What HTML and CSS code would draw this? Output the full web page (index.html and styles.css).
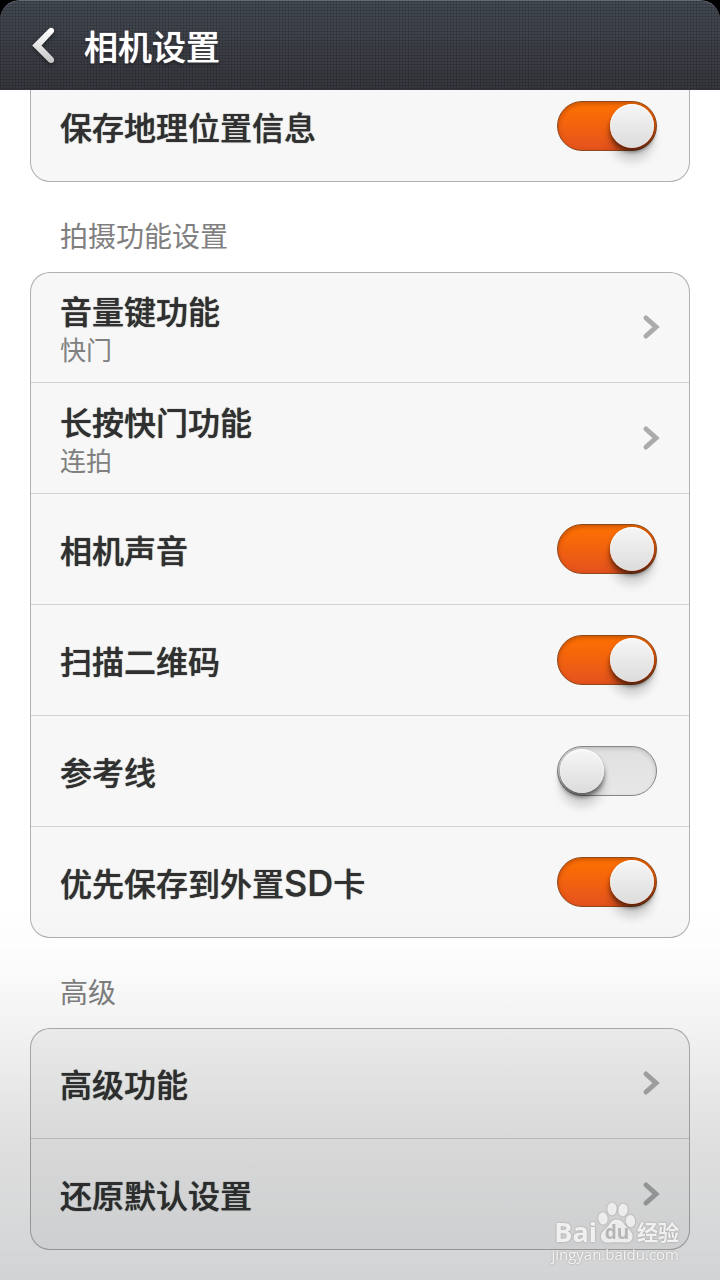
FILE: index.html
```html
<!DOCTYPE html>
<html lang="zh-CN">
<head>
  <meta charset="utf-8">
  <meta name="viewport" content="width=device-width, initial-scale=1">
  <title>相机设置</title>
  <link rel="stylesheet" href="styles.css">
</head>
<body>
  <div class="header-wrap">
    <header class="header">
      <button class="back" type="button" aria-label="返回">
        <svg width="24" height="38" viewBox="0 0 24 38">
          <defs>
            <linearGradient id="backFill" x1="0" y1="0" x2="0" y2="38" gradientUnits="userSpaceOnUse">
              <stop offset="0.1" stop-color="#ffffff"/>
              <stop offset="0.9" stop-color="#c8c8c8"/>
            </linearGradient>
          </defs>
          <path d="M16.6 1.9 Q18.6 0.2 20.9 1.2 Q23 3 21.5 5.6 L9.5 18.5 L21.5 31 Q23 33.8 20.9 35.6 Q18.6 36.6 16.6 34.9 L0.2 18.5 Z" fill="url(#backFill)"/>
        </svg>
      </button>
      <h1>相机设置</h1>
    </header>
  </div>

  <main class="settings">
    <div class="card card-first">
      <label class="row">
        <span class="title">保存地理位置信息</span>
        <input class="switch" type="checkbox" checked>
      </label>
    </div>

    <h2>拍摄功能设置</h2>
    <div class="card">
      <a class="row" href="#">
        <span class="texts">
          <span class="title">音量键功能</span>
          <span class="value">快门</span>
        </span>
        <svg class="arrow" width="18" height="26" viewBox="0 0 18 26"><path d="M4 4 L14 13 L4 22"/></svg>
      </a>
      <a class="row" href="#">
        <span class="texts">
          <span class="title">长按快门功能</span>
          <span class="value">连拍</span>
        </span>
        <svg class="arrow" width="18" height="26" viewBox="0 0 18 26"><path d="M4 4 L14 13 L4 22"/></svg>
      </a>
      <label class="row">
        <span class="title">相机声音</span>
        <input class="switch" type="checkbox" checked>
      </label>
      <label class="row">
        <span class="title">扫描二维码</span>
        <input class="switch" type="checkbox" checked>
      </label>
      <label class="row">
        <span class="title">参考线</span>
        <input class="switch" type="checkbox">
      </label>
      <label class="row">
        <span class="title">优先保存到外置<span class="latin">SD</span>卡</span>
        <input class="switch" type="checkbox" checked>
      </label>
    </div>

    <h2>高级</h2>
    <div class="card">
      <a class="row" href="#">
        <span class="title">高级功能</span>
        <svg class="arrow" width="18" height="26" viewBox="0 0 18 26"><path d="M4 4 L14 13 L4 22"/></svg>
      </a>
      <a class="row" href="#">
        <span class="title">还原默认设置</span>
        <svg class="arrow" width="18" height="26" viewBox="0 0 18 26"><path d="M4 4 L14 13 L4 22"/></svg>
      </a>
    </div>
  </main>

  <div class="shade"></div>

  <div class="watermark">
    <div class="brand">
      <span class="bai">Bai</span>
      <span class="paw">
        <svg width="38" height="42" viewBox="0 0 38 42">
          <ellipse cx="5" cy="16.5" rx="4.6" ry="6" transform="rotate(-8 5 16.5)"/>
          <ellipse cx="14" cy="7" rx="4.6" ry="6.2"/>
          <ellipse cx="25" cy="8" rx="4.6" ry="6.2" transform="rotate(10 25 8)"/>
          <ellipse cx="32.5" cy="19" rx="4.6" ry="6" transform="rotate(-8 32.5 19)"/>
          <path d="M18.5 17.5 C24 17.5 25.5 22 28.5 25 C32 28.5 35 31 34.5 35 C34 40 30 41 26 40.5 C22 40 16 40 12 40.5 C7 41 3 39.5 3 34.5 C3 30 7 28 9.5 25 C12.5 21.5 13.5 17.5 18.5 17.5 Z"/>
        </svg>
        <span class="du">du</span>
      </span>
      <span class="jingyan">经验</span>
    </div>
    <div class="site">jingyan.baidu.com</div>
  </div>
</body>
</html>
```

FILE: styles.css
```css
* {
  box-sizing: border-box;
}

body {
  margin: 0;
  min-height: 100vh;
  background: #fff;
  color: #303030;
  font-family: "Noto Sans CJK SC", sans-serif;
}

/* Title bar */
.header-wrap {
  position: relative;
  z-index: 1;
  background: #000;
}

.header {
  display: flex;
  align-items: center;
  gap: 28px;
  height: 90px;
  padding: 0 32px;
  border-top: 1px solid #646a72;
  border-radius: 20px 20px 0 0;
  background:
    repeating-linear-gradient(90deg, rgba(0, 0, 0, 0.14) 0 1px, transparent 1px 3px),
    repeating-linear-gradient(rgba(0, 0, 0, 0.14) 0 1px, transparent 1px 3px),
    linear-gradient(#434953, #3b3e45 60%, #36373d);
}

.header h1 {
  margin: 0;
  color: #fff;
  font-size: 34px;
  font-weight: 500;
  line-height: 48px;
  text-shadow: 0 0 1px #fff, 0 2px 3px rgba(0, 0, 0, 0.5);
}

.back {
  display: flex;
  padding: 0;
  border: 0;
  background: none;
  filter: drop-shadow(0 2px 2px rgba(0, 0, 0, 0.4));
}

/* Settings list */
.settings {
  padding: 0 30px 30px;
}

.settings h2 {
  display: flex;
  align-items: center;
  height: 90px;
  margin: 0;
  padding: 16px 0 0 30px;
  color: #808080;
  font-size: 28px;
  font-weight: 400;
}

.card {
  border-radius: 20px;
  background: #f7f7f7;
  box-shadow: inset 0 0 0 1px #b0b0b0;
}

/* the list is scrolled a little under the title bar */
.card-first {
  margin-top: -19px;
}

.row {
  display: flex;
  align-items: center;
  justify-content: space-between;
  height: 111px;
  margin: 0 1px;
  padding: 0 29px;
  border-bottom: 1px solid #d2d2d2;
  color: inherit;
  text-decoration: none;
}

.row:last-child {
  border-bottom-color: transparent;
}

.texts {
  display: flex;
  flex-direction: column;
}

.title {
  font-size: 32px;
  font-weight: 500;
  line-height: 44px;
  text-shadow: 0 0 1px #303030;
}

.latin {
  font-family: Inter, sans-serif;
  font-size: 36px;
}

.value {
  color: #808080;
  font-size: 26px;
  line-height: 34px;
}

.arrow {
  fill: none;
  stroke: #ababab;
  stroke-width: 5;
  stroke-linecap: round;
}

/* On/off switch */
.switch {
  appearance: none;
  flex: none;
  width: 100px;
  height: 50px;
  margin: 0 3px 0 0;
  padding: 2px;
  border: 1px solid #8c8480;
  border-radius: 25px;
  background: linear-gradient(#e0e0e0, #e8e8e8);
  box-shadow: inset 0 2px 4px rgba(0, 0, 0, 0.15);
}

.switch::before {
  content: "";
  display: block;
  width: 44px;
  height: 44px;
  border-radius: 50%;
  background: linear-gradient(#f6f6f6, #dcdcdc);
  box-shadow:
    inset 0 1px 2px #fff,
    0 4px 5px rgba(0, 0, 0, 0.55),
    0 14px 10px rgba(0, 0, 0, 0.14);
}

.switch:checked {
  border-color: #8f4a1c;
  background: linear-gradient(#ff7200, #e4521e);
  box-shadow: inset 0 2px 4px rgba(100, 30, 0, 0.35);
}

.switch:checked::before {
  margin-left: auto;
}

/* Darkening towards the bottom of the screen */
.shade {
  position: fixed;
  right: 0;
  bottom: 0;
  left: 0;
  height: 380px;
  background: linear-gradient(rgba(20, 24, 30, 0), rgba(20, 24, 30, 0.01) 15%, rgba(20, 24, 30, 0.06) 35%, rgba(20, 24, 30, 0.14) 65%, rgba(20, 24, 30, 0.19));
  pointer-events: none;
}

/* Watermark */
.watermark {
  position: fixed;
  right: 41px;
  bottom: 16px;
  color: rgba(255, 255, 255, 0.85);
  font-family: "Open Sans", "Noto Sans CJK SC", sans-serif;
  text-shadow: 0 0 2px rgba(0, 0, 0, 0.3);
}

.brand {
  display: flex;
  align-items: flex-end;
  justify-content: flex-end;
  gap: 1px;
  height: 42px;
}

.bai {
  font-size: 27px;
  font-weight: 700;
  line-height: 24px;
}

.paw {
  position: relative;
  display: flex;
}

.paw svg {
  fill: rgba(255, 255, 255, 0.8);
  filter: drop-shadow(0 0 1px rgba(0, 0, 0, 0.3));
}

.du {
  position: absolute;
  right: 0;
  bottom: 2px;
  left: 0;
  color: #b4b5b7;
  font-size: 19px;
  font-weight: 700;
  line-height: 20px;
  text-align: center;
  text-shadow: none;
}

.jingyan {
  font-size: 21px;
  font-weight: 700;
  line-height: 24px;
}

.site {
  font-size: 15px;
  line-height: 20px;
}
```
